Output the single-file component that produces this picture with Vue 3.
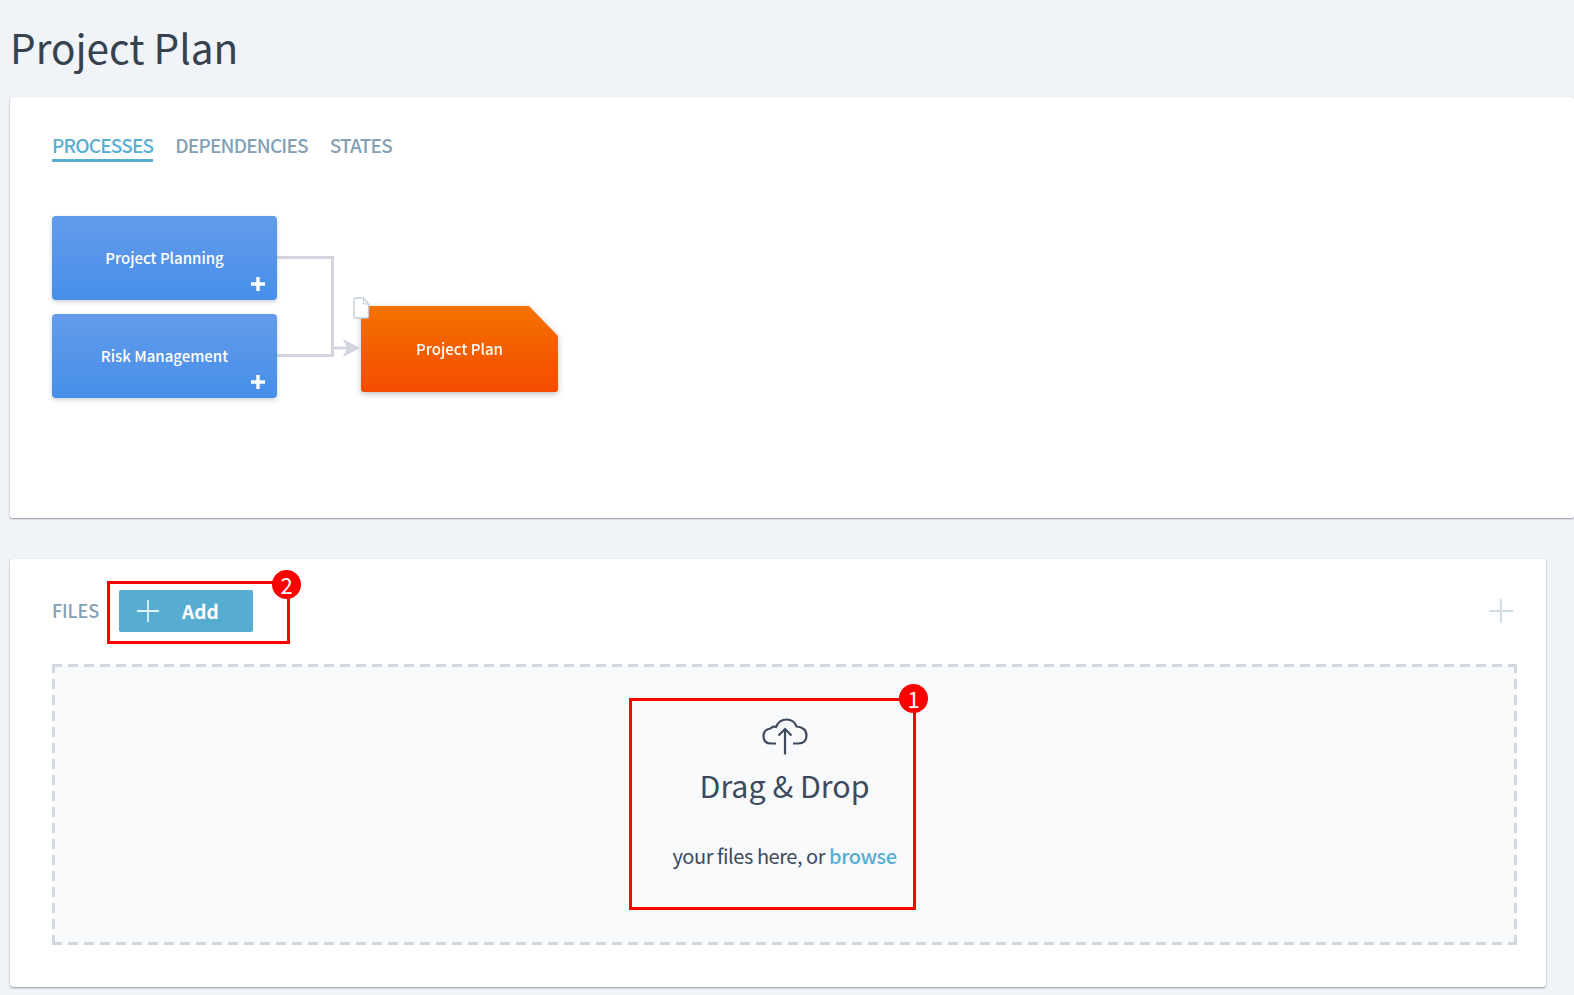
<template>
  <div class="page">
    <h1 class="title">Project Plan</h1>

    <!-- process diagram -->
    <section class="card top-card">
      <nav class="tabs">
        <a v-for="t in tabs" :key="t" class="tab" :class="{ active: t === activeTab }">{{ t }}</a>
      </nav>

      <div class="diagram">
        <svg class="lines" width="400" height="200" viewBox="0 0 400 200">
          <path d="M225 41.500H280.500V139.500H225" fill="none" stroke="#d3d6e0" stroke-width="3" />
          <path d="M280 132H296" fill="none" stroke="#d3d6e0" stroke-width="3" />
          <path d="M291 123L308 132L291 141L295 132Z" fill="#d3d6e0" />
        </svg>

        <div v-for="n in processes" :key="n.name" class="node" :style="{ top: n.top + 'px' }">
          {{ n.name }}
          <span class="node-plus">
            <svg width="14" height="14" viewBox="0 0 14 14">
              <path d="M7 0V14M0 7H14" stroke="#fff" stroke-width="3.400" />
            </svg>
          </span>
        </div>

        <div class="doc-shadow">
          <div class="doc-node">Project Plan</div>
        </div>
        <svg class="doc-icon" width="17" height="22" viewBox="0 0 17 22">
          <path d="M2.500 1H10.500L15.500 7V19.500Q15.500 21 14 21H2.500Q1 21 1 19.500V2.500Q1 1 2.500 1Z" fill="#fff" stroke="#c3cbd8" stroke-width="1.300" />
          <path d="M10.500 1V7H15.500" fill="none" stroke="#c3cbd8" stroke-width="1" />
        </svg>
      </div>
    </section>

    <!-- files -->
    <section class="card files-card">
      <header class="files-head">
        <span class="files-label">FILES</span>
        <div class="add-wrap">
          <button class="add-btn">
            <svg width="22" height="22" viewBox="0 0 22 22">
              <path d="M11 0V22M0 11H22" stroke="#dff0f7" stroke-width="1.800" />
            </svg>
            <span>Add</span>
          </button>
          <div class="mark mark-add"><span class="badge badge-add">2</span></div>
        </div>
        <svg class="head-plus" width="24" height="24" viewBox="0 0 24 24">
          <path d="M12 0V24M0 12H24" stroke="#cfdde6" stroke-width="2" />
        </svg>
      </header>

      <div class="dropzone">
        <div class="drop-inner">
          <svg class="cloud" width="46" height="37" viewBox="0 0 46 37">
            <path d="M14 25.500H9Q1.500 25.500 1.500 18Q1.500 11.500 8.500 10.500Q11 8 14 9Q17 1.500 24.500 1.500Q32 1.500 34.500 8.500Q44.500 9.500 44.500 17.500Q44.500 25.500 36 25.500H31" fill="none" stroke="#3c4a5c" stroke-width="2.200" />
            <path d="M23 36.500V11M16.500 17.500L23 11L29.500 17.500" fill="none" stroke="#3c4a5c" stroke-width="2.200" />
          </svg>
          <p class="drop-title">Drag &amp; Drop</p>
          <p class="drop-sub">your files here, or <a class="browse">browse</a></p>
          <div class="mark mark-drop"><span class="badge badge-drop">1</span></div>
        </div>
      </div>
    </section>
  </div>
</template>

<script setup>
const tabs = ['PROCESSES', 'DEPENDENCIES', 'STATES'];
const activeTab = 'PROCESSES';

const processes = [
  { name: 'Project Planning', top: 0 },
  { name: 'Risk Management', top: 98 },
];
</script>

<style scoped>
.page {
  width: 1574px;
  height: 995px;
  overflow: hidden;
  background: #f0f3f8;
  padding-left: 10px;
  box-sizing: border-box;
  font-family: "Noto Sans CJK SC", "Noto Sans", sans-serif;
}
.title {
  margin: 0;
  height: 97px;
  padding-top: 21px;
  box-sizing: border-box;
  font-size: 40.5px;
  line-height: 52px;
  font-weight: 400;
  color: #37424f;
}
.card {
  background: #fff;
  border-radius: 3px;
  box-shadow: 0 1px 2px rgba(70, 75, 85, 0.55);
}
.top-card {
  height: 421px;
  padding: 36px 42px 0;
  box-sizing: border-box;
}
.tabs {
  display: flex;
  gap: 22px;
}
.tab {
  height: 26px;
  font-size: 19px;
  letter-spacing: -0.8px;
  line-height: 24px;
  font-weight: 500;
  color: #84a0b4;
}
.tab.active {
  color: #57aed2;
  border-bottom: 3px solid #57aed2;
}
.diagram {
  position: relative;
  margin-top: 54px;
  height: 190px;
}
.lines {
  position: absolute;
  left: 0;
  top: 0;
}
.node {
  position: absolute;
  left: 0;
  width: 225px;
  height: 84px;
  padding-bottom: 2px;
  box-sizing: border-box;
  display: flex;
  align-items: center;
  justify-content: center;
  border-radius: 4px;
  background: linear-gradient(#639bea, #478fea);
  box-shadow: 0 2px 4px rgba(60, 70, 90, 0.25);
  color: #fff;
  font-size: 15px;
  font-weight: 500;
}
.node-plus {
  position: absolute;
  right: 12px;
  bottom: 12px;
  height: 14px;
}
.doc-shadow {
  position: absolute;
  left: 309px;
  top: 90px;
  filter: drop-shadow(0 2px 3px rgba(60, 50, 40, 0.3));
}
.doc-node {
  width: 197px;
  height: 86px;
  display: flex;
  align-items: center;
  justify-content: center;
  padding-bottom: 2px;
  box-sizing: border-box;
  clip-path: polygon(0 0, 168px 0, 100% 30px, 100% 100%, 0 100%);
  border-radius: 3px;
  background: linear-gradient(#f47200, #f54b00);
  color: #fff;
  font-size: 15px;
  font-weight: 500;
}
.doc-icon {
  position: absolute;
  left: 301px;
  top: 81px;
}
.files-card {
  margin-top: 41px;
  width: 1536px;
  height: 428px;
  padding: 31px 29px 0 42px;
  box-sizing: border-box;
}
.files-head {
  display: flex;
  align-items: center;
  height: 42px;
}
.files-label {
  font-size: 18px;
  letter-spacing: -0.1px;
  line-height: 40px;
  height: 42px;
  font-weight: 500;
  color: #84a0b4;
  width: 67px;
}
.add-wrap {
  position: relative;
}
.add-btn {
  width: 134px;
  height: 42px;
  display: flex;
  align-items: center;
  gap: 23px;
  padding: 0 0 2px 18px;
  border: none;
  border-radius: 2px;
  background: #56add1;
  color: #fff;
  font-family: inherit;
  font-size: 19px;
  font-weight: 700;
}
.add-btn svg {
  margin-top: 2px;
}
.head-plus {
  margin-left: auto;
  margin-right: 4px;
}
/* dashes drawn as gradients, a css dashed border has shorter dashes */
.dropzone {
  margin-top: 32px;
  height: 281px;
  box-sizing: border-box;
  background-color: #f8f9fb;
  background-image:
    repeating-linear-gradient(90deg, #d3d7e0 0 10px, transparent 10px 16px),
    repeating-linear-gradient(90deg, #d3d7e0 0 10px, transparent 10px 16px),
    repeating-linear-gradient(0deg, #d3d7e0 0 10px, transparent 10px 16px),
    repeating-linear-gradient(0deg, #d3d7e0 0 10px, transparent 10px 16px);
  background-size: 100% 3px, 100% 3px, 3px 100%, 3px 100%;
  background-position: 0 0, 0 100%, 0 0, 100% 0;
  background-repeat: no-repeat;
  display: flex;
  justify-content: center;
}
.drop-inner {
  position: relative;
  width: 225px;
  text-align: center;
  color: #3c4a5c;
  padding-top: 54px;
}
.cloud {
  display: block;
  margin: 0 auto;
}
.drop-title {
  margin: 8px 0 0;
  font-size: 30.400px;
  line-height: 44px;
}
.drop-sub {
  margin: 34px 0 0;
  font-size: 20px;
  letter-spacing: -0.45px;
  line-height: 30px;
  white-space: nowrap;
}
.browse {
  color: #57aed2;
  font-weight: 500;
}
/* red annotation boxes over the screen */
.mark {
  position: absolute;
  border: 3px solid #f00;
  box-sizing: border-box;
}
.mark-add {
  left: -12px;
  top: -9px;
  width: 183px;
  height: 63px;
}
.mark-drop {
  left: -43px;
  top: 34px;
  width: 287px;
  height: 212px;
}
.badge {
  position: absolute;
  width: 29px;
  height: 29px;
  border-radius: 50%;
  background: #f00;
  color: #fff;
  font-size: 22px;
  line-height: 29px;
  text-align: center;
}
.badge-add {
  right: -14px;
  top: -14px;
}
.badge-drop {
  right: -15px;
  top: -17px;
}
</style>
